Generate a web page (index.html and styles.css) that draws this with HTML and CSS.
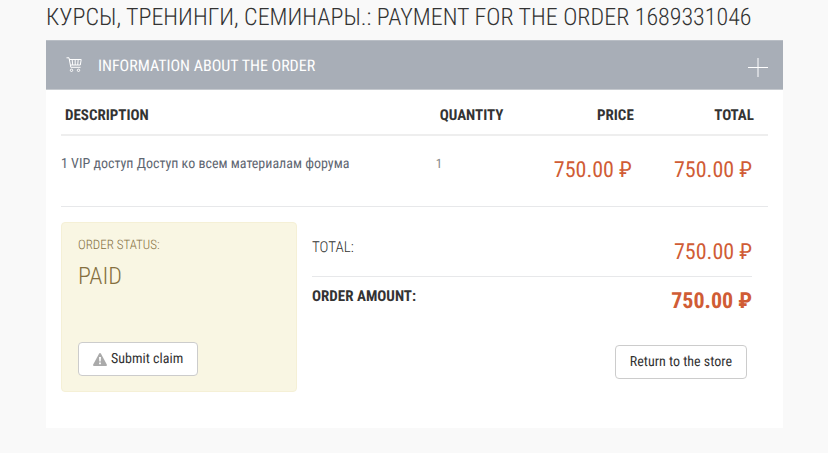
FILE: index.html
```
<!DOCTYPE html>
<html lang="en">
<head>
<meta charset="UTF-8">
<meta name="viewport" content="width=device-width, initial-scale=1.0">
<title>Payment for the order 1689331046</title>
<link rel="stylesheet" href="styles.css">
</head>
<body>
<main class="page">
    <h1 class="page-title">КУРСЫ, ТРЕНИНГИ, СЕМИНАРЫ.: PAYMENT FOR THE ORDER 1689331046</h1>
    <section class="card">
        <header class="card-header">
            <svg class="cart" viewBox="0 0 16 16" width="16" height="16" aria-hidden="true">
                <path d="M0.5 0.8H3L4.800 10.300H14.500M3.200 2.500H15.200L14.300 8H4.400M6.200 2.500L6.700 8M9.200 2.500V8M12.200 2.500L11.700 8"/>
                <circle cx="5.5" cy="13.3" r="1.2"/>
                <circle cx="12.5" cy="13.3" r="1.2"/>
            </svg>
            <h2>INFORMATION ABOUT THE ORDER</h2>
            <button class="toggle" type="button" aria-label="Expand">
                <svg viewBox="0 0 20 20" width="20" height="20">
                    <path d="M0 10.5H20"/>
                    <path d="M10 1V20" stroke-width="2" opacity="0.5"/>
                </svg>
            </button>
        </header>
        <div class="card-body">
            <table class="items">
                <thead>
                    <tr>
                        <th class="description">DESCRIPTION</th>
                        <th class="quantity">QUANTITY</th>
                        <th class="price">PRICE</th>
                        <th class="total">TOTAL</th>
                    </tr>
                </thead>
                <tbody>
                    <tr>
                        <td>1 VIP доступ Доступ ко всем материалам форума</td>
                        <td class="count">1</td>
                        <td class="money">750.00 ₽</td>
                        <td class="money">750.00 ₽</td>
                    </tr>
                </tbody>
            </table>
            <div class="summary">
                <div class="status">
                    <div class="status-label">ORDER STATUS:</div>
                    <div class="status-value">PAID</div>
                    <button class="btn" type="button">
                        <svg viewBox="0 0 14 13" width="14" height="13" aria-hidden="true">
                            <path fill="#aaa" d="M7 0Q7.600 0 8 0.700L13.800 11.400Q14.300 12.900 13 13H1Q-0.300 12.900 0.200 11.400L6 0.700Q6.400 0 7 0Z"/>
                            <path fill="#fff" d="M6 4H8L7.700 8.500H6.300ZM6.100 9.500H7.900V11.200H6.100Z"/>
                        </svg>
                        Submit claim
                    </button>
                </div>
                <div class="totals">
                    <dl>
                        <div class="line">
                            <dt>TOTAL:</dt>
                            <dd class="money">750.00 ₽</dd>
                        </div>
                        <div class="line amount">
                            <dt>ORDER AMOUNT:</dt>
                            <dd class="money">750.00 ₽</dd>
                        </div>
                    </dl>
                    <button class="btn" type="button">Return to the store</button>
                </div>
            </div>
        </div>
    </section>
</main>
</body>
</html>
```
FILE: styles.css
```
* {
    box-sizing: border-box;
}
body {
    margin: 0;
    background: #f9f9f9;
    color: #333;
    font-family: "Roboto Condensed", "Liberation Sans Narrow", Roboto, sans-serif;
    font-size: 15px;
    line-height: 20px;
    text-rendering: geometricPrecision;
}
.page {
    padding: 0 45px 24px 46px;
}
.page-title {
    margin: 0;
    padding: 1px 0 7px;
    font-size: 24px;
    line-height: 32px;
    font-weight: 300;
    white-space: nowrap;
}
.card {
    background: #fff;
}
.card-header {
    display: flex;
    align-items: center;
    height: 50px;
    padding: 0 15px 0 20px;
    background: #a8aeb7;
    border-top: 1px solid #b9bec5;
    border-bottom: 1px solid #c5c9ce;
    color: #fff;
}
.card-header h2 {
    flex: 1;
    margin: 2px 0 0 16px;
    font-size: 16px;
    font-weight: 400;
}
.cart {
    fill: none;
    stroke: #fff;
}
.toggle {
    display: flex;
    margin-top: 4px;
    padding: 0;
    background: none;
    border: none;
    stroke: #fff;
    cursor: pointer;
}
.card-body {
    padding: 0 15px 36px;
}
.items {
    width: 100%;
    border-collapse: collapse;
    table-layout: fixed;
}
.items th {
    padding: 15px 14px 9px 4px;
    border-bottom: 2px solid #eee;
    text-align: left;
}
.items td {
    height: 71px;
    padding: 18px 16px 0 0;
    border-bottom: 1px solid #e7e8ea;
    color: #5f6772;
    font-size: 14px;
    vertical-align: top;
}
.items .description {
    width: 53%;
}
.items .quantity {
    width: 15%;
}
.items .price {
    width: 15%;
    text-align: right;
}
.items .total {
    width: 17%;
    text-align: right;
}
.items .count {
    padding-top: 19px;
    color: #888;
    font-size: 13px;
}
.items td.money,
.line .money {
    color: #d05c35;
    font-size: 22px;
    line-height: 28px;
    text-align: right;
    white-space: nowrap;
}
.items td.money {
    padding-top: 21px;
}
.summary {
    display: flex;
    gap: 15px;
    margin-top: 15px;
}
.status {
    display: flex;
    flex-direction: column;
    align-items: flex-start;
    width: 236px;
    min-height: 170px;
    padding: 13px 16px 15px;
    background: #f9f6e3;
    border: 1px solid #f5f0d6;
    border-radius: 4px;
    color: #85703f;
    font-weight: 300;
}
.status-label {
    font-size: 13px;
}
.status-value {
    margin-top: 4px;
    font-size: 24px;
    line-height: 32px;
}
.status .btn {
    margin-top: auto;
}
.totals {
    display: flex;
    flex: 1;
    flex-direction: column;
    padding: 10px 16px 13px 0;
}
.totals dl,
.totals dd {
    margin: 0;
}
.line {
    display: flex;
    justify-content: space-between;
    padding: 5px 0 9px;
    font-weight: 300;
}
.line .money {
    padding-top: 2px;
    font-weight: 400;
}
.line.amount,
.amount .money {
    font-weight: 700;
}
.amount {
    padding-top: 9px;
    border-top: 1px solid #e7e8ea;
}
.totals .btn {
    align-self: flex-end;
    margin: auto 5px 0 0;
}
.btn {
    display: flex;
    align-items: center;
    gap: 4px;
    height: 34px;
    padding: 1px 14px 0;
    background: #fff;
    border: 1px solid #ccc;
    border-radius: 4px;
    color: #333;
    font-family: inherit;
    font-size: 14px;
    text-rendering: inherit;
    cursor: pointer;
}
```
